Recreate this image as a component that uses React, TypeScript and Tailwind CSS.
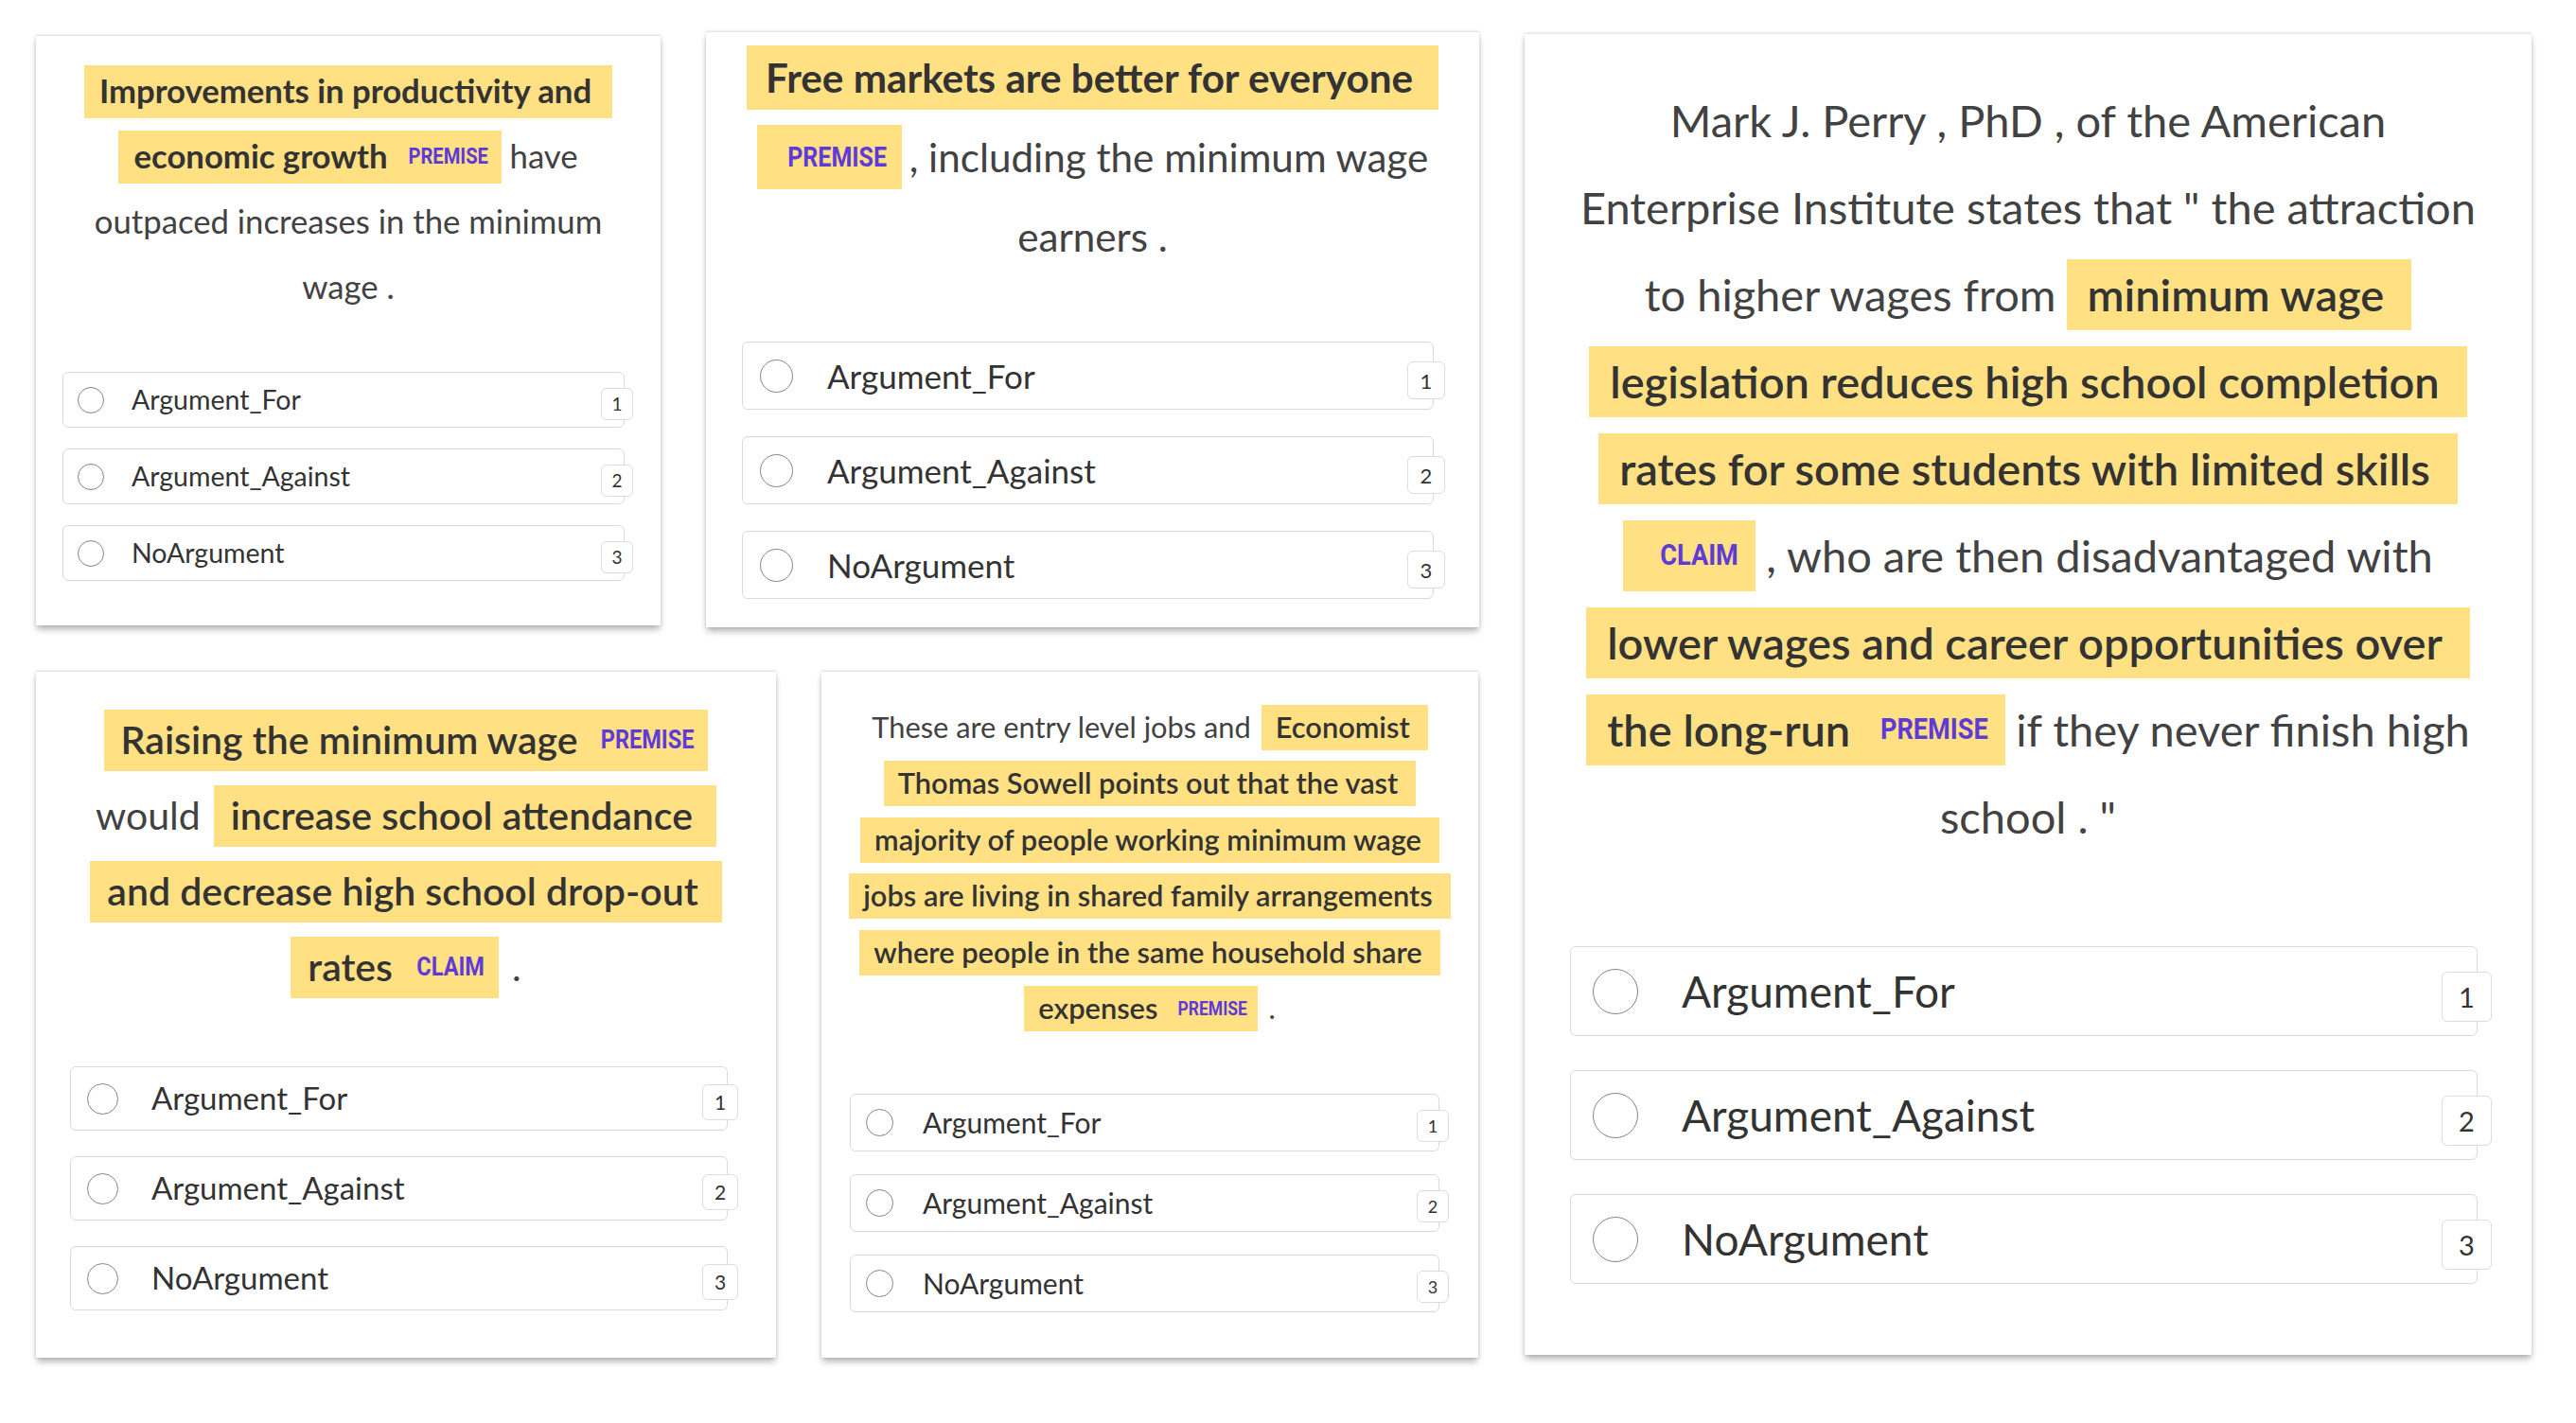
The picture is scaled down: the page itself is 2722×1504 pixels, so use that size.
import React from 'react';

type Seg = { t?: string; hl?: string; label?: 'PREMISE' | 'CLAIM' };

type CardCfg = {
    card: string;
    text: string;
    line: string;
    hl: string;
    hlWeight: string;
    plText: string;
    plLabel: string;
    prText: string;
    prLabel: string;
    labelMl: string;
    label: { PREMISE: string; CLAIM: string };
    lines: Seg[][];
    opts: string;
    row: string;
    radio: string;
    optLabel: string;
    badge: string;
};

const OPTIONS = ['Argument_For', 'Argument_Against', 'NoArgument'];

const card1: CardCfg = {
    card: 'w-[660px] h-[624px] pt-[24px]',
    text: 'text-[34.7px]',
    line: 'h-[69px] gap-[9px]',
    hl: 'h-[56px]',
    hlWeight: 'font-bold',
    plText: 'pl-[16px]',
    plLabel: 'pl-[38px]',
    prText: 'pr-[22px]',
    prLabel: 'pr-[14px]',
    labelMl: 'ml-[22px]',
    label: { PREMISE: 'w-[84px] text-[23.7px]', CLAIM: 'w-[61px] text-[23.7px]' },
    lines: [
        [{ hl: 'Improvements in productivity and' }],
        [{ hl: 'economic growth', label: 'PREMISE' }, { t: 'have' }],
        [{ t: 'outpaced increases in the minimum' }],
        [{ t: 'wage .' }],
    ],
    opts: 'mt-[55px] ml-[28px] mr-[38px] gap-[22px]',
    row: 'h-[59px]',
    radio: 'w-[28px] h-[28px] ml-[15px]',
    optLabel: 'text-[28.5px] ml-[29px]',
    badge: 'w-[34px] h-[34px] -right-[10px] top-[16px] text-[19px]',
};

const card2: CardCfg = {
    card: 'w-[817px] h-[630px] pt-[6px]',
    text: 'text-[42.2px]',
    line: 'h-[84px] gap-[8px]',
    hl: 'h-[68px]',
    hlWeight: 'font-bold',
    plText: 'pl-[20px]',
    plLabel: 'pl-[33px]',
    prText: 'pr-[27px]',
    prLabel: 'pr-[16px]',
    labelMl: 'ml-[13px]',
    label: { PREMISE: 'w-[104px] text-[29.4px]', CLAIM: 'w-[75px] text-[29.4px]' },
    lines: [
        [{ hl: 'Free markets are better for everyone' }],
        [{ hl: '', label: 'PREMISE' }, { t: ', including the minimum wage' }],
        [{ t: 'earners .' }],
    ],
    opts: 'mt-[69px] ml-[38px] mr-[48px] gap-[28px]',
    row: 'h-[72px]',
    radio: 'w-[35px] h-[35px] ml-[18px]',
    optLabel: 'text-[35px] ml-[36px]',
    badge: 'w-[40px] h-[40px] -right-[13px] top-[20px] text-[22px]',
};

const card3: CardCfg = {
    card: 'w-[1064px] h-[1397px] pt-[45px]',
    text: 'text-[47px]',
    line: 'h-[92px] gap-[11px]',
    hl: 'h-[75px]',
    hlWeight: 'font-semibold',
    plText: 'pl-[22px]',
    plLabel: 'pl-[39px]',
    prText: 'pr-[29px]',
    prLabel: 'pr-[19px]',
    labelMl: 'ml-[32px]',
    label: { PREMISE: 'w-[113px] text-[31.9px]', CLAIM: 'w-[82px] text-[31.9px]' },
    lines: [
        [{ t: 'Mark J. Perry , PhD , of the American' }],
        [{ t: 'Enterprise Institute states that " the attraction' }],
        [{ t: 'to higher wages from' }, { hl: 'minimum wage' }],
        [{ hl: 'legislation reduces high school completion' }],
        [{ hl: 'rates for some students with limited skills' }],
        [{ hl: '', label: 'CLAIM' }, { t: ', who are then disadvantaged with' }],
        [{ hl: 'lower wages and career opportunities over' }],
        [{ hl: 'the long-run', label: 'PREMISE' }, { t: 'if they never finish high' }],
        [{ t: 'school . "' }],
    ],
    opts: 'mt-[91px] ml-[48px] mr-[57px] gap-[36px]',
    row: 'h-[95px]',
    radio: 'w-[48px] h-[48px] ml-[23px]',
    optLabel: 'text-[46px] ml-[46px]',
    badge: 'w-[53px] h-[53px] -right-[16px] top-[26px] text-[29px]',
};

const card4: CardCfg = {
    card: 'w-[782px] h-[726px] pt-[32px]',
    text: 'text-[41px]',
    line: 'h-[80px] gap-[14px]',
    hl: 'h-[65px]',
    hlWeight: 'font-semibold',
    plText: 'pl-[18px]',
    plLabel: 'pl-[43px]',
    prText: 'pr-[25px]',
    prLabel: 'pr-[15px]',
    labelMl: 'ml-[25px]',
    label: { PREMISE: 'w-[98px] text-[27.7px]', CLAIM: 'w-[72px] text-[27.7px]' },
    lines: [
        [{ hl: 'Raising the minimum wage', label: 'PREMISE' }],
        [{ t: 'would' }, { hl: 'increase school attendance' }],
        [{ hl: 'and decrease high school drop-out' }],
        [{ hl: 'rates', label: 'CLAIM' }, { t: '.' }],
    ],
    opts: 'mt-[65px] ml-[36px] mr-[51px] gap-[27px]',
    row: 'h-[68px]',
    radio: 'w-[33px] h-[33px] ml-[17px]',
    optLabel: 'text-[33px] ml-[35px]',
    badge: 'w-[38px] h-[38px] -right-[12px] top-[18px] text-[21px]',
};

const card5: CardCfg = {
    card: 'w-[694px] h-[726px] pt-[29px]',
    text: 'text-[30.8px]',
    line: 'h-[59.5px] gap-[11px]',
    hl: 'h-[48px]',
    hlWeight: 'font-semibold',
    plText: 'pl-[15px]',
    plLabel: 'pl-[36px]',
    prText: 'pr-[19px]',
    prLabel: 'pr-[12px]',
    labelMl: 'ml-[21px]',
    label: { PREMISE: 'w-[73px] text-[20.6px]', CLAIM: 'w-[53px] text-[20.6px]' },
    lines: [
        [{ t: 'These are entry level jobs and' }, { hl: 'Economist' }],
        [{ hl: 'Thomas Sowell points out that the vast' }],
        [{ hl: 'majority of people working minimum wage' }],
        [{ hl: 'jobs are living in shared family arrangements' }],
        [{ hl: 'where people in the same household share' }],
        [{ hl: 'expenses', label: 'PREMISE' }, { t: '.' }],
    ],
    opts: 'mt-[60px] ml-[30px] mr-[41px] gap-[24px]',
    row: 'h-[61px]',
    radio: 'w-[29px] h-[29px] ml-[16px]',
    optLabel: 'text-[30px] ml-[31px]',
    badge: 'w-[34px] h-[34px] -right-[11px] top-[16px] text-[18px]',
};

function Label({ name, c }: { name: 'PREMISE' | 'CLAIM'; c: CardCfg }) {
    // condensed look: Roboto bold squeezed inside a box of the reference width
    return (
        <span className={`flex justify-center overflow-visible ${c.label[name]}`}>
            <span className="inline-block scale-x-[0.85] font-bold text-[#5e3bd9] font-[Roboto,sans-serif] whitespace-nowrap">
                {name}
            </span>
        </span>
    );
}

function Highlight({ seg, c }: { seg: Seg; c: CardCfg }) {
    const hasText = !!seg.hl;
    return (
        <span
            className={`bg-[#ffe082] flex items-center text-[#333] ${c.hl} ${c.hlWeight} ${hasText ? c.plText : c.plLabel} ${seg.label ? c.prLabel : c.prText}`}
        >
            {hasText && <span>{seg.hl}</span>}
            {seg.label && (
                <span className={hasText ? c.labelMl : ''}>
                    <Label name={seg.label} c={c} />
                </span>
            )}
        </span>
    );
}

function Card({ c }: { c: CardCfg }) {
    return (
        <div
            className={`bg-white border-t border-[#e6e6e6] shadow-[0_5px_7px_-1px_rgba(0,0,0,0.3),0_0_3px_rgba(0,0,0,0.12)] flex flex-col shrink-0 ${c.card}`}
        >
            <div className={`flex flex-col ${c.text}`}>
                {c.lines.map((line, i) => (
                    <div key={i} className={`flex items-center justify-center whitespace-pre ${c.line}`}>
                        {line.map((seg, j) =>
                            seg.hl !== undefined ? (
                                <Highlight key={j} seg={seg} c={c} />
                            ) : (
                                <span key={j} className="text-[#424242]">{seg.t}</span>
                            )
                        )}
                    </div>
                ))}
            </div>
            <div className={`flex flex-col ${c.opts}`}>
                {OPTIONS.map((label, i) => (
                    <div key={label} className={`relative flex items-center border border-[#dadada] rounded-[6px] bg-white ${c.row}`}>
                        <span className={`rounded-full border-[1.5px] border-[#858585] bg-white shrink-0 ${c.radio}`} />
                        <span className={`text-[#333] ${c.optLabel}`}>{label}</span>
                        <span
                            className={`absolute flex items-center justify-center bg-white border border-[#dcdcdc] rounded-[6px] text-[#333] ${c.badge}`}
                        >
                            {i + 1}
                        </span>
                    </div>
                ))}
            </div>
        </div>
    );
}

export default function App() {
    return (
        <div className="w-[2722px] h-[1504px] bg-white flex items-start pl-[38px] pt-[33px] font-[Lato,'Open_Sans',sans-serif]">
            <div className="flex flex-col gap-[46px]">
                <div className="flex items-start gap-[48px]">
                    <div className="mt-[4px]">
                        <Card c={card1} />
                    </div>
                    <Card c={card2} />
                </div>
                <div className="flex items-start gap-[48px]">
                    <Card c={card4} />
                    <Card c={card5} />
                </div>
            </div>
            <div className="ml-[48px] mt-[2px]">
                <Card c={card3} />
            </div>
        </div>
    );
}
